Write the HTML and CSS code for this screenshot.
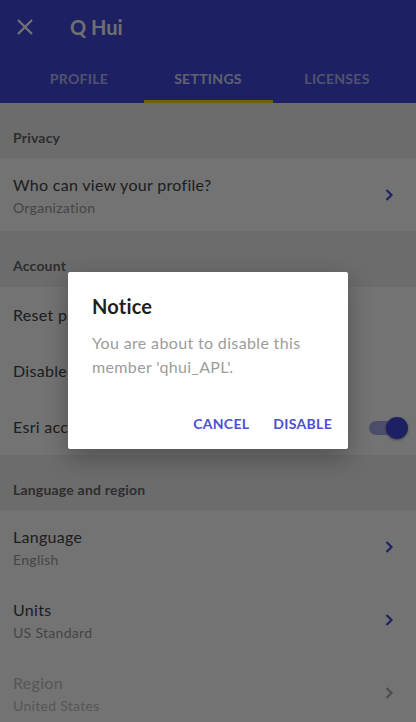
FILE: index.html
```html
<!DOCTYPE html>
<html>
<head>
<meta charset="utf-8">
<link rel="stylesheet" href="styles.css">
</head>
<body>
<div class="app">
  <header class="topbar">
    <div class="titlerow">
      <svg class="close" width="18" height="18" viewBox="0 0 18 18"><path d="M2 2 L16 16 M16 2 L2 16" stroke="#fff" stroke-width="2.2" fill="none"/></svg>
      <span class="name">Q Hui</span>
    </div>
    <nav class="tabs">
      <div class="tab">PROFILE</div>
      <div class="tab active">SETTINGS</div>
      <div class="tab">LICENSES</div>
    </nav>
  </header>
  <main class="content">
    <div class="section">Privacy</div>
    <div class="row two">
      <div class="texts"><div class="title">Who can view your profile?</div><div class="sub">Organization</div></div>
      <svg class="chev" width="10" height="14" viewBox="0 0 10 14"><path d="M2.5 2 L7.5 7 L2.5 12" stroke="currentColor" stroke-width="2.2" fill="none"/></svg>
    </div>
    <div class="section tall">Account</div>
    <div class="row one"><div class="title">Reset password</div></div>
    <div class="row one"><div class="title">Disable member</div></div>
    <div class="row one">
      <div class="title">Esri access</div>
      <div class="toggle"><div class="knob"></div></div>
    </div>
    <div class="section">Language and region</div>
    <div class="row two">
      <div class="texts"><div class="title">Language</div><div class="sub">English</div></div>
      <svg class="chev" width="10" height="14" viewBox="0 0 10 14"><path d="M2.5 2 L7.5 7 L2.5 12" stroke="currentColor" stroke-width="2.2" fill="none"/></svg>
    </div>
    <div class="row two">
      <div class="texts"><div class="title">Units</div><div class="sub">US Standard</div></div>
      <svg class="chev" width="10" height="14" viewBox="0 0 10 14"><path d="M2.5 2 L7.5 7 L2.5 12" stroke="currentColor" stroke-width="2.2" fill="none"/></svg>
    </div>
    <div class="row two disabled">
      <div class="texts"><div class="title">Region</div><div class="sub">United States</div></div>
      <svg class="chev" width="10" height="14" viewBox="0 0 10 14"><path d="M2.5 2 L7.5 7 L2.5 12" stroke="currentColor" stroke-width="2.2" fill="none"/></svg>
    </div>
  </main>
</div>
<div class="scrim"></div>
<div class="dialog">
  <h2 class="dtitle">Notice</h2>
  <p class="dbody">You are about to disable this member 'qhui_APL'.</p>
  <div class="actions">
    <span class="btn">CANCEL</span>
    <span class="btn">DISABLE</span>
  </div>
</div>
</body>
</html>
```
FILE: styles.css
```css
* { box-sizing: border-box; }
html, body { margin: 0; padding: 0; }
body {
  width: 416px;
  height: 722px;
  overflow: hidden;
  font-family: Lato, "Noto Sans", sans-serif;
  background: #fff;
  position: relative;
}
.app { width: 416px; }
.topbar {
  background: #4149dc;
  height: 103px;
  display: flex;
  flex-direction: column;
}
.titlerow {
  height: 54px;
  display: flex;
  align-items: center;
  padding-left: 16px;
}
.close { margin-right: 36px; }
.name {
  color: #fff;
  font-size: 20px;
  font-weight: 700;
  opacity: 0.95;
}
.tabs {
  flex: 1;
  display: flex;
  justify-content: center;
}
.tab {
  flex: 0 0 129px;
  display: flex;
  align-items: center;
  justify-content: center;
  color: rgba(255,255,255,0.62);
  font-size: 14px;
  font-weight: 700;
  letter-spacing: 0.3px;
  border-bottom: 3px solid transparent;
  padding-top: 2px;
}
.tab.active {
  color: rgba(255,255,255,0.8);
  border-bottom-color: #ffd600;
}
.content { display: flex; flex-direction: column; }
.section {
  background: #f0f0f0;
  height: 55px;
  padding: 25px 13px 0;
  font-size: 14px;
  font-weight: 700;
  color: #666;
  line-height: 20px;
  letter-spacing: 0.2px;
}
.section.tall { height: 56px; }
.row {
  display: flex;
  align-items: center;
  justify-content: space-between;
  padding: 0 13px;
  background: #fff;
}
.row.one { height: 56px; }
.row.two { height: 73px; }
.title {
  font-size: 16px;
  color: #444;
  line-height: 22px;
  letter-spacing: 0.3px;
}
.sub {
  font-size: 14px;
  color: #9a9a9a;
  line-height: 20px;
  margin-top: 2px;
  letter-spacing: 0.3px;
}
.row.two .texts { padding-top: 3px; }
.chev { color: #4149dc; margin-right: 9px; }
.disabled .title { color: #c2c2c2; }
.disabled .sub { color: #c2c2c2; }
.disabled .chev { color: #aaa; }
.toggle {
  width: 36px;
  height: 14px;
  border-radius: 7px;
  background: #a8acee;
  position: relative;
  margin-right: -2px;
  margin-top: 2px;
}
.knob {
  position: absolute;
  right: -3px;
  top: -4px;
  width: 22px;
  height: 22px;
  border-radius: 50%;
  background: #4149dc;
  box-shadow: 0 1px 3px rgba(0,0,0,0.4);
}
.scrim {
  position: absolute;
  inset: 0;
  background: rgba(0,0,0,0.55);
}
.dialog {
  position: absolute;
  left: 68px;
  top: 272px;
  width: 280px;
  height: 177px;
  background: #fff;
  border-radius: 2px;
  padding: 22px 24px 0;
  box-shadow: 0 8px 24px rgba(0,0,0,0.3);
}
.dtitle {
  margin: 0;
  font-size: 20px;
  font-weight: 700;
  color: #1f1f1f;
  line-height: 24px;
  letter-spacing: 0.2px;
}
.dbody {
  margin: 13px 0 0;
  font-size: 16px;
  line-height: 24px;
  color: #9c9c9c;
  letter-spacing: 0.35px;
}
.actions {
  display: flex;
  justify-content: flex-end;
  gap: 24px;
  margin-top: 35px;
  margin-right: -8px;
}
.btn {
  color: #4a4fd6;
  font-size: 14px;
  font-weight: 700;
  letter-spacing: 0.3px;
  line-height: 20px;
}
```
